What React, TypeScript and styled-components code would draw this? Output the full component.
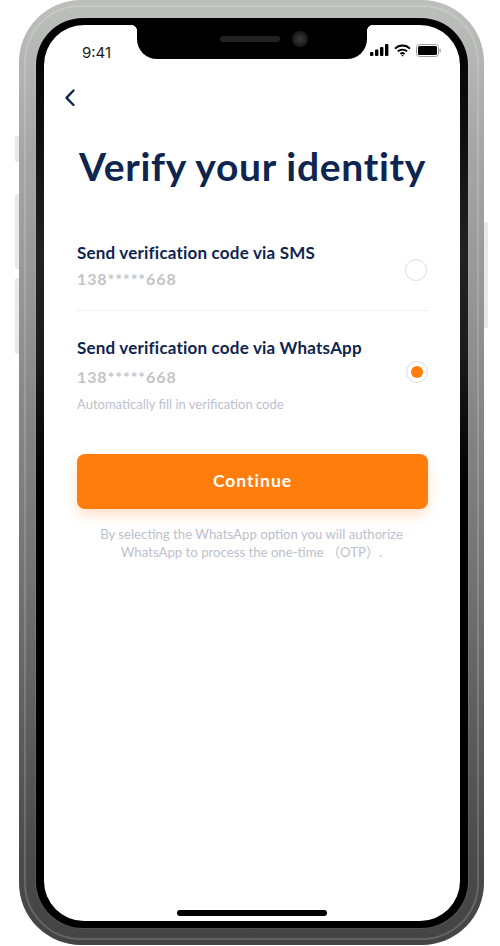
import React from "react"
import styled, { createGlobalStyle } from "styled-components"

const Global = createGlobalStyle`
  html, body {
    margin: 0;
    padding: 0;
    background: #fff;
  }
  body {
    width: 500px;
    height: 946px;
    overflow: hidden;
    font-family: "Lato", "Noto Sans CJK SC", "Liberation Sans", sans-serif;
  }
  * {
    box-sizing: border-box;
  }
`

const Page = styled.div`
  width: 500px;
  height: 946px;
  padding-left: 19px;
`

const Phone = styled.div`
  position: relative;
  width: 465px;
  height: 945px;
  padding: 18px 16px 17px 17px;
  border-radius: 62px;
  background: linear-gradient(180deg, #bdbfbd 0%, #a5a6a5 16%, #959595 32%, #888 42%, #707070 63%, #5a5a5a 79%, #4a4a4a 91%, #444 100%);
  &::before {
    content: "";
    position: absolute;
    inset: 5px;
    border-radius: 57px;
    border: 2px solid rgba(255, 255, 255, 0.17);
    pointer-events: none;
  }
`

const SideButton = styled.span<{ $side: "left" | "right"; $top: number; $height: number }>`
  position: absolute;
  top: ${p => p.$top}px;
  height: ${p => p.$height}px;
  width: 4px;
  background: #e9e9e9;
  ${p => (p.$side === "left" ? "left: -4px; border-radius: 2px 0 0 2px;" : "right: -4px; border-radius: 0 2px 2px 0;")}
`

const Bezel = styled.div`
  position: relative;
  z-index: 1;
  width: 432px;
  height: 910px;
  padding: 7px 8px;
  border-radius: 47px;
  background: linear-gradient(180deg, #000 0%, #111 14%, #222 26%, #1c1c1c 36%, #0c0c0c 45%, #000 52%);
  box-shadow: 0 0 0 1px rgba(255, 255, 255, 0.08);
`

const Screen = styled.div`
  position: relative;
  width: 416px;
  height: 896px;
  overflow: hidden;
  border-radius: 40px;
  background: #fff;
  display: flex;
  flex-direction: column;
`

const Notch = styled.div`
  position: absolute;
  top: 0;
  left: 93px;
  width: 230px;
  height: 34px;
  background: #000;
  border-radius: 0 0 20px 20px;
  display: flex;
  align-items: center;
  justify-content: center;
  gap: 12px;
  padding: 0 0 6px 24px;
  &::before,
  &::after {
    content: "";
    position: absolute;
    top: 0;
    width: 5px;
    height: 5px;
  }
  &::before {
    left: -5px;
    background: radial-gradient(circle at 0 100%, transparent 4.5px, #000 5px);
  }
  &::after {
    right: -5px;
    background: radial-gradient(circle at 100% 100%, transparent 4.5px, #000 5px);
  }
`

const Speaker = styled.span`
  width: 60px;
  height: 6px;
  border-radius: 3px;
  background: #222;
`

const Camera = styled.span`
  width: 16px;
  height: 16px;
  border-radius: 50%;
  background: radial-gradient(circle, #3a3a3a 0%, #1c1c1c 60%, #0c0c0c 100%);
`

const StatusBar = styled.div`
  display: flex;
  align-items: center;
  justify-content: space-between;
  height: 24px;
  margin-top: 15px;
  padding: 0 19px 0 38px;
`

const Time = styled.span`
  font-family: "Inter", "Liberation Sans", sans-serif;
  font-size: 15px;
  color: #1c1c1c;
`

const StatusIcons = styled.div`
  display: flex;
  align-items: center;
  gap: 5px;
  margin-top: -4px;
`

const BackButton = styled.button`
  display: block;
  width: 14px;
  height: 20px;
  margin: 24px 0 0 19px;
  padding: 0;
  border: 0;
  background: none;
`

const Content = styled.div`
  padding: 0 32px 0 33px;
`

const Title = styled.h1`
  margin: 34px 0 0 2px;
  font-size: 39px;
  line-height: 48px;
  font-weight: 700;
  letter-spacing: 0.7px;
  color: #0e2550;
  white-space: nowrap;
`

const Option = styled.div<{ $divider?: boolean; $top: number; $pad: number }>`
  display: flex;
  align-items: center;
  justify-content: space-between;
  margin-top: ${p => p.$top}px;
  padding-bottom: ${p => p.$pad}px;
  border-bottom: ${p => (p.$divider ? "1px solid #eeeff1" : "0")};
`

const OptionText = styled.div`
  display: flex;
  flex-direction: column;
`

const OptionTitle = styled.div`
  font-size: 17px;
  line-height: 24px;
  font-weight: 700;
  letter-spacing: 0.2px;
  color: #0e2550;
`

const Masked = styled.div<{ $top: number }>`
  margin-top: ${p => p.$top}px;
  font-size: 16px;
  line-height: 22px;
  font-weight: 700;
  letter-spacing: 0.9px;
  color: #c2c4c8;
`

const Hint = styled.div`
  margin-top: 7px;
  font-size: 13px;
  line-height: 18px;
  color: #bcc1cd;
`

const Radio = styled.span<{ $checked?: boolean; $shift: number }>`
  flex: none;
  display: flex;
  align-items: center;
  justify-content: center;
  width: 22px;
  height: 22px;
  margin: ${p => p.$shift}px ${p => (p.$checked ? "0" : "1px")} 0 0;
  border-radius: 50%;
  border: 1px solid #dcdde0;
  background: #fff;
  &::after {
    content: "";
    display: ${p => (p.$checked ? "block" : "none")};
    width: 12px;
    height: 12px;
    border-radius: 50%;
    background: #ff7d0d;
  }
`

const ContinueButton = styled.button`
  display: block;
  width: 351px;
  height: 55px;
  margin-top: 41px;
  padding: 0 0 2px;
  border: 0;
  border-radius: 8px;
  background: #ff7d0d;
  box-shadow: 0 6px 12px rgba(255, 125, 13, 0.22);
  color: #fff;
  font-family: inherit;
  font-size: 17.5px;
  font-weight: 700;
  letter-spacing: 1px;
`

const Note = styled.p`
  margin: 16px 0 0;
  padding-right: 2px;
  font-size: 13.2px;
  line-height: 18px;
  text-align: center;
  color: #bcc1cd;
`

const HomeIndicator = styled.span`
  position: absolute;
  left: 133px;
  bottom: 5px;
  width: 150px;
  height: 6px;
  border-radius: 3px;
  background: #000;
`

const App: React.FC = () => {
  return (
    <Page>
      <Global />
      <Phone>
        <SideButton $side="left" $top={136} $height={26} />
        <SideButton $side="left" $top={194} $height={75} />
        <SideButton $side="left" $top={278} $height={76} />
        <SideButton $side="right" $top={222} $height={106} />
        <Bezel>
          <Screen>
            <Notch>
              <Speaker />
              <Camera />
            </Notch>
            <StatusBar>
              <Time>9:41</Time>
              <StatusIcons>
                <svg width="19" height="12" viewBox="0 0 19 12" fill="#000">
                  <rect x="0" y="8" width="3.4" height="4" rx="1" />
                  <rect x="5" y="5.5" width="3.4" height="6.5" rx="1" />
                  <rect x="10" y="3" width="3.4" height="9" rx="1" />
                  <rect x="15" y="0" width="3.4" height="12" rx="1" />
                </svg>
                <svg width="17" height="13" viewBox="0 0 17 13" fill="none" stroke="#000" strokeWidth="1.9">
                  <path d="M1 4.6 C5.2 .5 11.8 .5 16 4.6" />
                  <path d="M3.8 7.4 C6.4 5 10.6 5 13.2 7.4" />
                  <path d="M6.5 10 C7.6 9 9.4 9 10.5 10" />
                  <circle cx="8.5" cy="11.6" r="0.8" fill="#000" stroke="none" />
                </svg>
                <svg width="25" height="13" viewBox="0 0 25 13">
                  <rect x="0.5" y="0.5" width="22" height="12" rx="3" fill="none" stroke="#9c9c9c" />
                  <rect x="2" y="2" width="19" height="9" rx="1.6" fill="#000" />
                  <rect x="23.5" y="4.5" width="1.2" height="4" rx="0.6" fill="#9c9c9c" />
                </svg>
              </StatusIcons>
            </StatusBar>
            <BackButton aria-label="Back">
              <svg width="14" height="20" viewBox="0 0 14 20" fill="none" stroke="#0e2550" strokeWidth="2.4" strokeLinecap="round" strokeLinejoin="round">
                <path d="M10.5 2.5 L3.5 9.8 L10.5 17" />
              </svg>
            </BackButton>
            <Content>
              <Title>Verify your identity</Title>
              <Option $divider $top={51} $pad={20}>
                <OptionText>
                  <OptionTitle>Send verification code via SMS</OptionTitle>
                  <Masked $top={3}>138*****668</Masked>
                </OptionText>
                <Radio $shift={8} />
              </Option>
              <Option $top={25} $pad={0}>
                <OptionText>
                  <OptionTitle>Send verification code via WhatsApp</OptionTitle>
                  <Masked $top={6}>138*****668</Masked>
                  <Hint>Automatically fill in verification code</Hint>
                </OptionText>
                <Radio $checked $shift={-6} />
              </Option>
              <ContinueButton>Continue</ContinueButton>
              <Note>
                By selecting the WhatsApp option you will authorize
                <br />
                WhatsApp to process the one-time （OTP）.
              </Note>
            </Content>
            <HomeIndicator />
          </Screen>
        </Bezel>
      </Phone>
    </Page>
  )
}

export default App
